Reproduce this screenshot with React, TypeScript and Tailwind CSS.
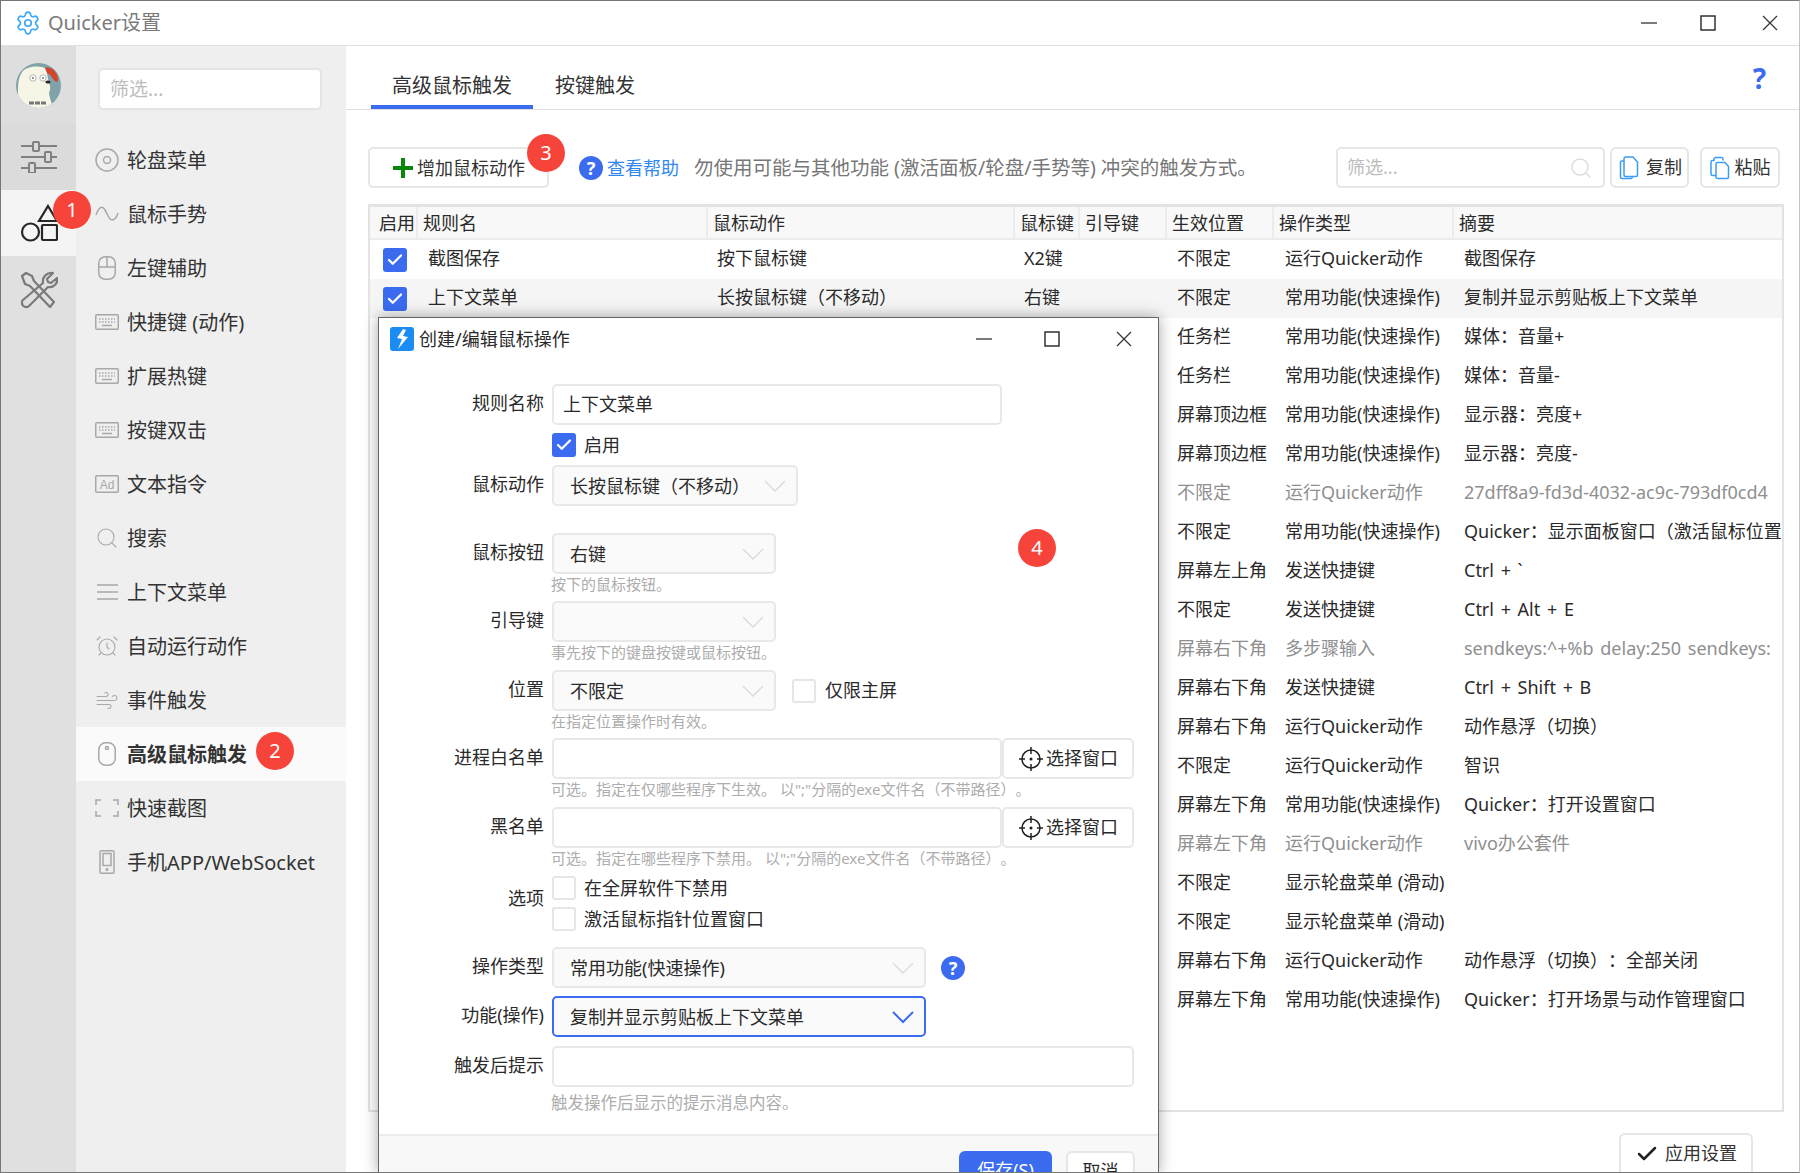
import { ReactNode } from 'react';
import { AlarmClock, Check, Search, Settings, Wind } from 'lucide-react';

const COLS = 'grid grid-cols-[48px_290px_307px_65px_87px_107px_180px_1fr]';
const FONT = 'font-["Noto_Sans","Noto_Sans_CJK_SC",sans-serif]';

type Row = { name?: string; trigger?: string; btn?: string; pos: string; type: string; note: string; off?: boolean };

const CHANGY = '常用功能(快速操作)';
const RUN = '运行Quicker动作';
const HOTKEY = '发送快捷键';
const WHEEL = '显示轮盘菜单 (滑动)';

const rows: Row[] = [
  { name: '截图保存', trigger: '按下鼠标键', btn: 'X2键', pos: '不限定', type: RUN, note: '截图保存' },
  { name: '上下文菜单', trigger: '长按鼠标键（不移动）', btn: '右键', pos: '不限定', type: CHANGY, note: '复制并显示剪贴板上下文菜单' },
  { pos: '任务栏', type: CHANGY, note: '媒体：音量+' },
  { pos: '任务栏', type: CHANGY, note: '媒体：音量-' },
  { pos: '屏幕顶边框', type: CHANGY, note: '显示器：亮度+' },
  { pos: '屏幕顶边框', type: CHANGY, note: '显示器：亮度-' },
  { pos: '不限定', type: RUN, note: '27dff8a9-fd3d-4032-ac9c-793df0cd4', off: true },
  { pos: '不限定', type: CHANGY, note: 'Quicker：显示面板窗口（激活鼠标位置' },
  { pos: '屏幕左上角', type: HOTKEY, note: 'Ctrl + `' },
  { pos: '不限定', type: HOTKEY, note: 'Ctrl + Alt + E' },
  { pos: '屏幕右下角', type: '多步骤输入', note: 'sendkeys:^+%b delay:250 sendkeys:', off: true },
  { pos: '屏幕右下角', type: HOTKEY, note: 'Ctrl + Shift + B' },
  { pos: '屏幕右下角', type: RUN, note: '动作悬浮（切换）' },
  { pos: '不限定', type: RUN, note: '智识' },
  { pos: '屏幕左下角', type: CHANGY, note: 'Quicker：打开设置窗口' },
  { pos: '屏幕左下角', type: RUN, note: 'vivo办公套件', off: true },
  { pos: '不限定', type: WHEEL, note: '' },
  { pos: '不限定', type: WHEEL, note: '' },
  { pos: '屏幕右下角', type: RUN, note: '动作悬浮（切换）：全部关闭' },
  { pos: '屏幕左下角', type: CHANGY, note: 'Quicker：打开场景与动作管理窗口' },
];

function Line({ children, w = 24, h = 24 }: { children: ReactNode; w?: number; h?: number }) {
  return (
    <svg width={w} height={h} viewBox={`0 0 ${w} ${h}`} fill="none" stroke="#a8a8a8" strokeWidth="1.5">
      {children}
    </svg>
  );
}

function KeyboardIcon() {
  return (
    <Line h={16}>
      <rect x="0.75" y="0.75" width="22.5" height="14.5" rx="1" strokeWidth="1.5" />
      <path d="M4 5h16M4 8h16" strokeDasharray="1.5 1.5" strokeWidth="1.5" />
      <path d="M7 11.5h10" strokeWidth="1.5" />
    </Line>
  );
}

const navItems: { label: string; icon: ReactNode; active?: boolean }[] = [
  { label: '轮盘菜单', icon: <Line><circle cx="12" cy="12" r="11" /><circle cx="12" cy="12" r="3.5" /></Line> },
  { label: '鼠标手势', icon: <Line><path d="M1 13C4 5 7 3 10 8s4 10 7 10 5-4 6-7" /></Line> },
  { label: '左键辅助', icon: <Line><rect x="3.75" y="0.75" width="16.5" height="22.5" rx="6.5" /><path d="M3.75 11h16.5M12 .75V11" /></Line> },
  { label: '快捷键 (动作)', icon: <KeyboardIcon /> },
  { label: '扩展热键', icon: <KeyboardIcon /> },
  { label: '按键双击', icon: <KeyboardIcon /> },
  {
    label: '文本指令',
    icon: (
      <svg width="24" height="18" viewBox="0 0 24 18" fill="none">
        <rect x="0.75" y="0.75" width="22.5" height="16.5" rx="1" stroke="#a8a8a8" strokeWidth="1.5" />
        <text x="12" y="13.5" textAnchor="middle" fontSize="12" fontFamily="Liberation Sans" fill="#a8a8a8">Ad</text>
      </svg>
    ),
  },
  { label: '搜索', icon: <Search size={28} strokeWidth={1.1} color="#a8a8a8" /> },
  { label: '上下文菜单', icon: <Line><path d="M2 5h21M2 12h21M2 19h21" /></Line> },
  { label: '自动运行动作', icon: <AlarmClock size={28} strokeWidth={1.1} color="#a8a8a8" /> },
  { label: '事件触发', icon: <Wind size={27} strokeWidth={1.1} color="#a8a8a8" /> },
  {
    label: '高级鼠标触发',
    active: true,
    icon: <Line><rect x="3.75" y="0.75" width="16.5" height="22.5" rx="7" /><circle cx="12" cy="6" r="1.5" /></Line>,
  },
  { label: '快速截图', icon: <Line h={18}><path d="M6 1H1v5M18 1h5v5M6 17H1v-5M18 17h5v-5" /></Line> },
  { label: '手机APP/WebSocket', icon: <Line><rect x="5" y="0.75" width="14" height="22.5" rx="1.5" /><rect x="8" y="3.5" width="8" height="12" /><circle cx="12" cy="19.5" r=".8" /></Line> },
];

function Bear() {
  return (
    <svg width="45" height="45" viewBox="0 0 45 45" className="rounded-full">
      <rect width="45" height="45" fill="#7fa3a9" />
      <path d="M2 45V26C2 14 6 6 12 5c6-2 14-2 18 1l3 14c2 4 1 8 0 10 1 6 3 12 5 15z" fill="#f6f5e6" />
      <path d="M29 5c3-2 8 0 11 5 2 3 3 7 1 9-3 0-5-6-8-8-1 1-3-3-4-6z" fill="#d2452c" />
      <circle cx="17" cy="15" r="3.2" fill="#fff" stroke="#888" strokeWidth=".6" />
      <circle cx="27" cy="15" r="3.2" fill="#fff" stroke="#888" strokeWidth=".6" />
      <circle cx="17" cy="15" r=".9" fill="#666" />
      <circle cx="27" cy="15" r=".9" fill="#666" />
      <ellipse cx="32" cy="19" rx="2.6" ry="1.5" fill="#222" />
      <path d="M13 40h18" stroke="#777" strokeWidth="3" strokeDasharray="5 1" />
    </svg>
  );
}

function Badge({ n, className }: { n: number; className: string }) {
  return (
    <div className={`absolute z-20 flex size-[38px] items-center justify-center rounded-full bg-[#f6443a] text-[20px] text-white ${className}`}>
      {n}
    </div>
  );
}

function Box({ on, className = '' }: { on?: boolean; className?: string }) {
  if (on) {
    return (
      <span className={`flex size-[24px] shrink-0 items-center justify-center rounded-[3px] bg-[#3b6cf0] ${className}`}>
        <Check size={18} strokeWidth={3} color="white" />
      </span>
    );
  }
  return <span className={`block size-[24px] shrink-0 rounded-[3px] border-2 border-[#e6e6e6] bg-white ${className}`} />;
}

function Chevron({ active }: { active?: boolean }) {
  return (
    <svg width="22" height="14" viewBox="0 0 22 14" fill="none" stroke={active ? '#3b6cf0' : '#dcdcdc'} strokeWidth={active ? 2 : 1.5}>
      <path d="M1 2l10 10L21 2" />
    </svg>
  );
}

function Select({ value, width, active }: { value?: string; width: string; active?: boolean }) {
  return (
    <div className={`flex h-[41px] items-center justify-between rounded-[5px] border-2 bg-[#fafafa] pl-[16px] pr-[10px] ${width} ${active ? 'border-[#3b6cf0]' : 'border-[#e8e8e8]'}`}>
      <span className="pt-[2px]">{value}</span>
      <Chevron active={active} />
    </div>
  );
}

function Input({ value, width }: { value?: string; width: string }) {
  return (
    <div className={`flex h-[41px] items-center rounded-[5px] border-2 border-[#e8e8e8] bg-white pl-[9px] ${width}`}>{value}</div>
  );
}

function FormRow({ label, className = '', children }: { label: string; className?: string; children: ReactNode }) {
  return (
    <div className={`flex gap-[8px] ${className}`}>
      <div className="h-[37px] w-[165px] shrink-0 text-right leading-[39px]">{label}</div>
      {children}
    </div>
  );
}

function Hint({ children, className = 'text-[15px]' }: { children: ReactNode; className?: string }) {
  return <p className={`ml-[172px] h-[20px] leading-[20px] text-[#adadad] ${className}`}>{children}</p>;
}

function PickButton() {
  return (
    <div className="flex h-[41px] w-[132px] items-center rounded-[5px] border-2 border-[#e8e8e8] bg-white pl-[15px]">
      <svg width="24" height="24" viewBox="0 0 24 24" fill="none" stroke="#222" strokeWidth="1.5" className="mr-[3px] shrink-0">
        <circle cx="12" cy="12" r="9" />
        <path d="M12 0v7M12 17v7M0 12h6M18 12h6" />
        <circle cx="12" cy="12" r=".8" fill="#222" />
      </svg>
      选择窗口
    </div>
  );
}

function HelpDot({ className = '' }: { className?: string }) {
  return (
    <span className={`flex size-[24px] shrink-0 items-center justify-center rounded-full bg-[#3b6cf0] text-[18px] font-bold leading-none text-white ${className}`}>?</span>
  );
}

function CopyIcon() {
  return (
    <svg width="20" height="24" viewBox="0 0 20 24" fill="none" stroke="#3b9df5" strokeWidth="1.5">
      <path d="M5 3.5V19a1.5 1.5 0 0 0 1.5 1.5H17a1.5 1.5 0 0 0 1.5-1.5V6L14 1H7a2 2 0 0 0-2 2.5z" />
      <path d="M5 5H3a1.5 1.5 0 0 0-1.5 1.5V21A1.5 1.5 0 0 0 3 22.5h9a2 2 0 0 0 1.5-2" />
    </svg>
  );
}

function PasteIcon() {
  return (
    <svg width="20" height="24" viewBox="0 0 20 24" fill="none" stroke="#3b9df5" strokeWidth="1.5">
      <path d="M13 4.5V3a1.5 1.5 0 0 0-1.5-1.5h-6A1.5 1.5 0 0 0 4 3v1.5H2.5A1.5 1.5 0 0 0 1 6v12a1.5 1.5 0 0 0 1.5 1.5H6" />
      <path d="M6 8a1.5 1.5 0 0 1 1.5-1.5H15l3.5 4V21a1.5 1.5 0 0 1-1.5 1.5H7.5A1.5 1.5 0 0 1 6 21z" />
    </svg>
  );
}

function WinControls({ first, second }: { first: string; second: string }) {
  return (
    <div className="flex items-center">
      <svg width="16" height="16" viewBox="0 0 16 16" stroke="#333" strokeWidth="1.3"><path d="M0 8h16" /></svg>
      <svg width="16" height="16" viewBox="0 0 16 16" stroke="#333" strokeWidth="1.5" fill="none" className={first}><rect x="1" y="1" width="14" height="14" /></svg>
      <svg width="16" height="16" viewBox="0 0 16 16" stroke="#333" strokeWidth="1.2" className={second}><path d="M1 1l14 14M15 1L1 15" /></svg>
    </div>
  );
}

function Dialog() {
  return (
    <div className="absolute left-[377px] top-[316px] z-10 flex h-[856px] w-[781px] flex-col border border-b-0 border-[#666] bg-white text-[18px] text-[#2a2a2a] shadow-[0_0_14px_rgba(0,0,0,0.35)]">
      <div className="flex h-[42px] items-center pl-[11px] pr-[26px]">
        <span className="mr-[5px] flex size-[24px] items-center justify-center rounded-[3px] bg-[#1c8cf5]">
          <svg width="16" height="22" viewBox="0 0 16 22" fill="white"><path d="M9 1L3 10l5 1-4 10 10-12-5-1 3-6z" /></svg>
        </span>
        <span className="flex-1">创建/编辑鼠标操作</span>
        <WinControls first="ml-[52px]" second="ml-[56px]" />
      </div>
      <div className="mt-[24px]">
        <FormRow label="规则名称">
          <Input value="上下文菜单" width="w-[450px]" />
        </FormRow>
        <div className="ml-[173px] mt-[8px] flex h-[24px] items-center gap-[8px]">
          <Box on />
          启用
        </div>
        <FormRow label="鼠标动作" className="mt-[8px]">
          <Select value="长按鼠标键（不移动）" width="w-[246px]" />
        </FormRow>
        <FormRow label="鼠标按钮" className="mt-[27px]">
          <Select value="右键" width="w-[224px]" />
        </FormRow>
        <Hint>按下的鼠标按钮。</Hint>
        <FormRow label="引导键" className="mt-[7px]">
          <Select width="w-[224px]" />
        </FormRow>
        <Hint>事先按下的键盘按键或鼠标按钮。</Hint>
        <FormRow label="位置" className="mt-[8px]">
          <Select value="不限定" width="w-[224px]" />
          <div className="ml-[8px] flex h-[41px] items-center gap-[9px]">
            <Box />
            仅限主屏
          </div>
        </FormRow>
        <Hint>在指定位置操作时有效。</Hint>
        <FormRow label="进程白名单" className="mt-[7px]">
          <div className="flex">
            <Input width="w-[450px]" />
            <PickButton />
          </div>
        </FormRow>
        <Hint>可选。指定在仅哪些程序下生效。 以";"分隔的exe文件名（不带路径）。</Hint>
        <FormRow label="黑名单" className="mt-[8px]">
          <div className="flex">
            <Input width="w-[450px]" />
            <PickButton />
          </div>
        </FormRow>
        <Hint>可选。指定在哪些程序下禁用。 以";"分隔的exe文件名（不带路径）。</Hint>
        <div className="mt-[8px] flex gap-[8px]">
          <div className="h-[54px] w-[165px] shrink-0 text-right leading-[44px]">选项</div>
          <div className="flex flex-col gap-[7px]">
            <div className="flex h-[24px] items-center gap-[8px]"><Box />在全屏软件下禁用</div>
            <div className="flex h-[24px] items-center gap-[8px]"><Box />激活鼠标指针位置窗口</div>
          </div>
        </div>
        <FormRow label="操作类型" className="mt-[16px]">
          <Select value="常用功能(快速操作)" width="w-[374px]" />
          <HelpDot className="ml-[7px] mt-[9px]" />
        </FormRow>
        <FormRow label="功能(操作)" className="mt-[8px]">
          <Select value="复制并显示剪贴板上下文菜单" width="w-[374px]" active />
        </FormRow>
        <FormRow label="触发后提示" className="mt-[9px]">
          <Input width="w-[582px]" />
        </FormRow>
        <Hint className="mt-[6px] text-[16.5px]">触发操作后显示的提示消息内容。</Hint>
      </div>
      <div className="mt-[21px] flex flex-1 justify-end gap-[14px] overflow-hidden border-t-2 border-[#ececec] bg-[#f8f8f8] pr-[23px] pt-[15px]">
        <div className="h-[40px] w-[93px] rounded-[6px] bg-[#3b6cf0] pt-[6px] text-center text-white">保存(S)</div>
        <div className="h-[40px] w-[69px] rounded-[6px] border-2 border-[#e6e6e6] bg-white pt-[5px] text-center">取消</div>
      </div>
    </div>
  );
}

function Table() {
  return (
    <div className="ml-[22px] mt-[16px] h-[908px] w-[1416px] overflow-hidden border-2 border-t-[3px] border-[#e3e3e3] text-[18px] text-[#2a2a2a]">
      <div className={`${COLS} h-[33px] items-center border-b-2 border-[#ececec] bg-[#f8f8f8] leading-[32px]`}>
        <div className="h-full border-r-2 border-[#ececec] pl-[9px]">启用</div>
        <div className="h-full border-r-2 border-[#ececec] pl-[5px]">规则名</div>
        <div className="h-full border-r-2 border-[#ececec] pl-[5px]">鼠标动作</div>
        <div className="h-full border-r-2 border-[#ececec] pl-[5px]">鼠标键</div>
        <div className="h-full border-r-2 border-[#ececec] pl-[5px]">引导键</div>
        <div className="h-full border-r-2 border-[#ececec] pl-[5px]">生效位置</div>
        <div className="h-full border-r-2 border-[#ececec] pl-[5px]">操作类型</div>
        <div className="pl-[5px]">摘要</div>
      </div>
      {rows.map((r, i) => (
        <div key={i} className={`${COLS} h-[39px] items-center whitespace-nowrap pb-[2px] ${i === 1 ? 'bg-[#f5f5f5]' : ''} ${r.off ? 'text-[#8f8f8f]' : ''}`}>
          <div className="pl-[13px] pt-[2px]">{i < 2 && <Box on />}</div>
          <div className="pl-[10px]">{r.name}</div>
          <div className="pl-[9px]">{r.trigger}</div>
          <div className="pl-[9px]">{r.btn}</div>
          <div />
          <div className="pl-[10px]">{r.pos}</div>
          <div className="pl-[11px]">{r.type}</div>
          <div className="overflow-hidden pl-[10px] [word-spacing:2px]">{r.note}</div>
        </div>
      ))}
    </div>
  );
}

export default function App() {
  return (
    <div className={`${FONT} relative flex h-[1173px] w-[1800px] flex-col overflow-hidden border border-[#777] border-r-[#c4c4c4] bg-white [text-spacing-trim:space-all]`}>
      <header className="flex h-[45px] shrink-0 items-center justify-between border-b border-[#e0e0e0] pl-[14px] pr-[21px]">
        <div className="flex items-center gap-[7px] text-[20px] text-[#7a7a7a]">
          <Settings size={26} strokeWidth={1.6} color="#3fa9f5" />
          Quicker设置
        </div>
        <WinControls first="ml-[43px]" second="ml-[46px]" />
      </header>

      <div className="flex flex-1 overflow-hidden">
        <aside className="flex w-[75px] shrink-0 flex-col bg-[#e0e0e0]">
          <div className="flex h-[78px] justify-center bg-[#dedede] pt-[17px]">
            <Bear />
          </div>
          <div className="flex h-[66px] items-center justify-center bg-[#dbdbdb]">
            <svg width="36" height="32" viewBox="0 0 36 32" fill="none" stroke="#808080" strokeWidth="2">
              <path d="M0 5h12M18 5h18M0 16h24M30 16h6M0 27h8M14 27h22" />
              <rect x="12" y="1" width="6" height="9" rx="1" />
              <rect x="24" y="11" width="6" height="10" rx="1" />
              <rect x="8" y="22" width="6" height="10" rx="1" />
            </svg>
          </div>
          <div className="flex h-[66px] items-center justify-center bg-[#f4f4f4]">
            <svg width="38" height="38" viewBox="0 0 38 38" fill="none" stroke="#262626" strokeWidth="2.2">
              <path d="M29 2l9 15H20z" transform="translate(-1 0)" />
              <circle cx="10.5" cy="28" r="8.5" />
              <rect x="22" y="21" width="15" height="15" rx="1" />
            </svg>
          </div>
          <div className="flex h-[68px] items-center justify-center">
            <svg width="38" height="38" viewBox="0 0 38 38" fill="none" stroke="#7a7a7a" strokeWidth="2.2" strokeLinejoin="round">
              <path d="M2 5l4-3 6 3 2 5 20 21-4 5-20-21-5-2z" />
              <path d="M33 2l-6 6 1 3 3 1 6-5c1 5-3 10-9 9L9 35c-2 2-7 1-7-3 0-1 0-3 1-3l20-17c-1-6 4-11 10-10z" />
            </svg>
          </div>
        </aside>

        <nav className="w-[270px] shrink-0 bg-[#efefef] pt-[22px] text-[20px] text-[#333]">
          <div className="ml-[22px] flex h-[42px] w-[224px] items-center rounded-[5px] border-2 border-[#e4e4e4] bg-white pl-[10px] text-[19px] text-[#bdbdbd]">筛选...</div>
          <div className="mt-[23px]">
            {navItems.map((item) => (
              <div key={item.label} className={`flex h-[54px] items-center pl-[19px] ${item.active ? 'bg-[#fafafa] font-bold' : ''}`}>
                <span className="mr-[8px] flex w-[24px] justify-center">{item.icon}</span>
                <span className="pt-[1px]">{item.label}</span>
              </div>
            ))}
          </div>
        </nav>

        <main className="min-w-0 flex-1">
          <div className="flex h-[64px] items-end border-b border-[#e0e0e0] pl-[25px] pr-[33px] text-[20px] text-[#333]">
            <div className="flex h-[63px] w-[162px] items-center justify-center border-b-4 border-[#3b6cf0] pt-[20px]">高级鼠标触发</div>
            <div className="ml-[22px] flex h-[63px] flex-1 items-center pt-[16px]">按键触发</div>
            <div className="self-center text-[28px] font-bold text-[#3b6cf0]">?</div>
          </div>

          <div className="mt-[37px] flex h-[41px] items-center pl-[22px] text-[18px] text-[#333]">
            <div className="flex h-[41px] w-[181px] items-center rounded-[5px] border-2 border-[#e6e6e6] pl-[23px] pt-[1px]">
              <svg width="20" height="20" viewBox="0 0 20 20" fill="#0a860a" className="mr-[4px]"><path d="M8 0h4v8h8v4h-8v8H8v-8H0V8h8z" /></svg>
              增加鼠标动作
            </div>
            <HelpDot className="ml-[30px]" />
            <span className="ml-[4px] pt-[1px] text-[#2f88f0]">查看帮助</span>
            <span className="ml-[15px] pt-[1px] text-[19.5px] text-[#777]">勿使用可能与其他功能 (激活面板/轮盘/手势等) 冲突的触发方式。</span>
            <div className="ml-auto flex items-center">
              <div className="flex h-[41px] w-[269px] items-center justify-between rounded-[5px] border-2 border-[#e6e6e6] pl-[9px] pr-[5px] text-[#bdbdbd]">
                筛选...
                <Search size={24} strokeWidth={1.4} color="#dcdcdc" className="mr-[5px]" />
              </div>
              <div className="ml-[5px] flex h-[41px] w-[79px] items-center justify-center gap-[7px] rounded-[6px] border-2 border-[#e6e6e6] pl-[2px]"><CopyIcon />复制</div>
              <div className="ml-[11px] mr-[19px] flex h-[41px] w-[80px] items-center justify-center gap-[5px] rounded-[6px] border-2 border-[#e6e6e6]"><PasteIcon />粘贴</div>
            </div>
          </div>

          <Table />

          <div className="mt-[21px] flex justify-end pr-[46px] text-[18px] text-[#333]">
            <div className="flex h-[60px] w-[134px] items-start justify-center gap-[6px] rounded-[6px] border-2 border-[#e6e6e6] pt-[5px]">
              <Check size={24} strokeWidth={2.5} color="#222" className="mt-[2px]" />
              应用设置
            </div>
          </div>
        </main>
      </div>

      <Dialog />
      <Badge n={1} className="left-[52px] top-[190px]" />
      <Badge n={2} className="left-[255px] top-[731px]" />
      <Badge n={3} className="left-[526px] top-[133px]" />
      <Badge n={4} className="left-[1017px] top-[528px]" />
    </div>
  );
}
